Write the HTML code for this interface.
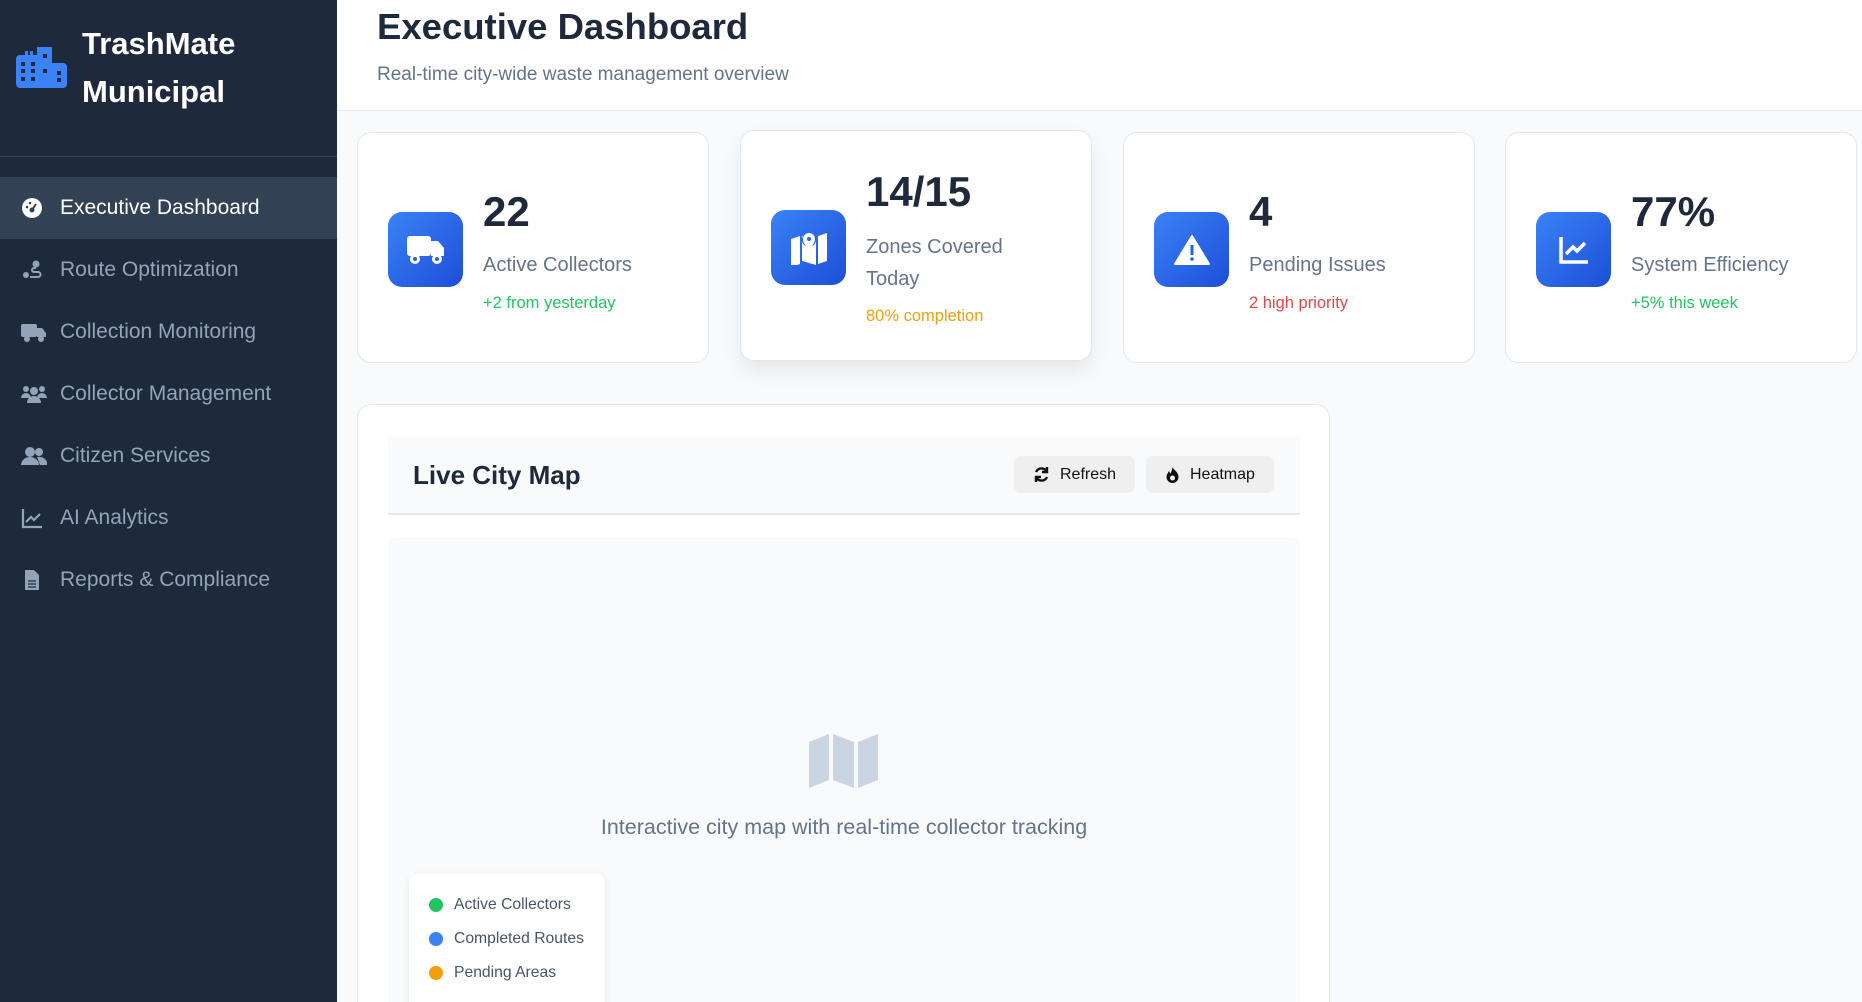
<!DOCTYPE html>
<html><head><meta charset="utf-8"><style>
*{box-sizing:border-box;margin:0;padding:0}
html,body{width:1862px;height:1002px;overflow:hidden}
body{font-family:"Liberation Sans",sans-serif;background:#f8fafc;position:relative}
#wrap{position:absolute;left:0;top:0;width:1862px;height:1002px;overflow:hidden}
.sb{position:absolute;left:0;top:0;width:337px;height:1002px;background:#1e293b}
.logo{position:absolute;left:16px;top:47px}
.brand{position:absolute;left:82px;top:20px;color:#fff;font-weight:bold;font-size:31px;line-height:48px}
.div{position:absolute;left:0;top:156px;width:337px;height:1px;background:#334155}
.nav{position:absolute;left:0;width:337px;height:62px;display:flex;align-items:center;color:#94a3b8;font-size:21px}
.nav.act{background:#334155;color:#fff}
.nav svg{position:absolute;left:21px}
.nav span{position:absolute;left:60px}
.hdr{position:absolute;left:337px;top:0;right:0;height:111px;background:#fff;border-bottom:1px solid #e2e8f0}
.hdr h1{position:absolute;left:40px;top:6px;font-size:36.5px;color:#1e293b}
.hdr p{position:absolute;left:40px;top:64px;font-size:19px;color:#64748b}
.card{position:absolute;top:132px;width:352px;height:231px;background:#fff;border:1px solid #e2e8f0;border-radius:14px}
.ib{position:absolute;left:30px;top:79px;width:75px;height:75px;border-radius:14px;background:linear-gradient(135deg,#3b82f6,#1d4ed8);display:flex;align-items:center;justify-content:center}
.num{position:absolute;left:125px;font-size:42px;font-weight:bold;color:#1e293b}
.lbl{position:absolute;left:125px;font-size:20px;color:#64748b;line-height:32px}
.sub{position:absolute;left:125px;font-size:16.5px}
.map{position:absolute;left:357px;top:404px;width:973px;height:598px;background:#fff;border:1px solid #e2e8f0;border-bottom:none;border-radius:14px 14px 0 0}
.mh{position:absolute;left:30px;top:31px;width:912px;height:79px;background:#f8fafc;border-bottom:2px solid #e2e8f0}
.mh h2{position:absolute;left:25px;top:24px;font-size:26px;color:#1e293b}
.btn{position:absolute;top:20px;height:37px;background:#efefef;border-radius:7px;font-size:16px;color:#111;display:flex;align-items:center;padding-left:19px;gap:10px}
.ma{position:absolute;left:30px;top:132px;width:912px;height:466px;background:#f8fafc;border-radius:10px 10px 0 0;overflow:hidden}
.lg{position:absolute;width:196px;height:140px;background:#fff;border-radius:8px 8px 0 0;box-shadow:0 2px 8px rgba(0,0,0,.08)}
.li{position:absolute;left:20px;font-size:15.7px;color:#475569;display:flex;align-items:center;gap:11px}
.dot{width:14px;height:14px;border-radius:50%}
</style></head><body><div id="wrap">
<div class="sb">
<svg class="logo" width="52" height="41" viewBox="0 0 52 41"><path d="M6 8h3V4h3v4h2V4h3v4h4V0h15v16h11a4 4 0 014 4v17a4 4 0 01-4 4H4a4 4 0 01-4-4V12a4 4 0 014-4z" fill="#3b82f6"/><g fill="#1e293b"><rect x="5" y="15" width="4" height="4"/><rect x="15" y="15" width="4" height="4"/><rect x="5" y="22" width="4" height="4"/><rect x="15" y="22" width="4" height="4"/><rect x="5" y="30" width="4" height="4"/><rect x="15" y="30" width="4" height="4"/><rect x="27" y="7" width="4" height="4"/><rect x="27" y="22" width="4" height="4"/><rect x="41" y="24" width="4" height="4"/><rect x="41" y="31" width="4" height="4"/></g></svg>
<div class="brand">TrashMate<br>Municipal</div>
<div class="div"></div>
<div class="nav act" style="top:177px"><svg width="22" height="22" viewBox="0 0 22 22"><circle cx="11" cy="11" r="10" fill="#fff"/><circle cx="11" cy="13" r="2.5" fill="#334155"/><path d="M11 13l4-6" stroke="#334155" stroke-width="2"/><circle cx="6" cy="10" r="1.3" fill="#334155"/><circle cx="9" cy="6" r="1.3" fill="#334155"/></svg><span>Executive Dashboard</span></div>
<div class="nav" style="top:239px"><svg width="22" height="22" viewBox="0 0 22 22" fill="#94a3b8"><circle cx="15" cy="5" r="3.5"/><circle cx="5" cy="16" r="3"/><path d="M9 18h8a2.5 2.5 0 000-5h-4a2 2 0 010-4h2" stroke="#94a3b8" stroke-width="2" fill="none"/></svg><span>Route Optimization</span></div>
<div class="nav" style="top:301px"><svg width="26" height="22" viewBox="0 0 26 22" fill="#94a3b8"><rect x="0" y="3" width="16" height="13" rx="2"/><path d="M16 7h5l4 5v4h-9z"/><circle cx="6" cy="18" r="3"/><circle cx="20" cy="18" r="3"/></svg><span>Collection Monitoring</span></div>
<div class="nav" style="top:363px"><svg width="26" height="22" viewBox="0 0 26 22" fill="#94a3b8"><circle cx="5" cy="6" r="3"/><circle cx="21" cy="6" r="3"/><circle cx="13" cy="8" r="4"/><path d="M0 15a5 5 0 0110 0zM16 15a5 5 0 0110 0zM6 20a7 7 0 0114 0z"/></svg><span>Collector Management</span></div>
<div class="nav" style="top:425px"><svg width="26" height="22" viewBox="0 0 26 22" fill="#94a3b8"><circle cx="9" cy="7" r="5"/><circle cx="18" cy="7" r="4"/><path d="M0 20a9 8 0 0118 0zM16 12a8 7 0 0110 8h-7z"/></svg><span>Citizen Services</span></div>
<div class="nav" style="top:487px"><svg width="22" height="22" viewBox="0 0 22 22" fill="none" stroke="#94a3b8" stroke-width="2.2"><path d="M2 2v18h19M5 15l5-5 3 3 6-6"/></svg><span>AI Analytics</span></div>
<div class="nav" style="top:549px"><svg width="22" height="22" viewBox="0 0 22 22"><path d="M4 1h9l5 5v15H4z" fill="#94a3b8"/><path d="M7 12h8M7 15h8M7 18h8" stroke="#1e293b" stroke-width="1.3"/></svg><span>Reports &amp; Compliance</span></div>
</div>
<div class="hdr"><h1>Executive Dashboard</h1><p>Real-time city-wide waste management overview</p></div>

<div class="card" style="left:357px"><div class="ib"><svg width="40" height="34" viewBox="0 0 40 34" fill="#fff"><rect x="1" y="3" width="24" height="20" rx="3"/><path d="M25 8h7l6 7v8H25z"/><circle cx="9" cy="26" r="5"/><circle cx="31" cy="26" r="5"/><circle cx="9" cy="26" r="2" fill="#2563eb"/><circle cx="31" cy="26" r="2" fill="#2563eb"/></svg></div>
<div class="num" style="top:55px">22</div><div class="lbl" style="top:116px">Active Collectors</div><div class="sub" style="top:161px;color:#22c55e">+2 from yesterday</div></div>

<div class="card" style="left:740px;top:130px;box-shadow:0 10px 20px rgba(0,0,0,.08)"><div class="ib"><svg width="38" height="34" viewBox="0 0 38 34" fill="#fff"><path d="M1 8l9-3v28l-9 3zM28 5l9-3v28l-9 3zM12 5l14 4v25l-14-4z"/><circle cx="19" cy="9" r="7" fill="#2563eb"/><path d="M19 2a6 6 0 016 6c0 5-6 11-6 11s-6-6-6-11a6 6 0 016-6z" fill="#fff"/><circle cx="19" cy="8" r="2" fill="#2563eb"/></svg></div>
<div class="num" style="top:37px">14/15</div><div class="lbl" style="top:100px">Zones Covered<br>Today</div><div class="sub" style="top:176px;color:#f59e0b">80% completion</div></div>

<div class="card" style="left:1123px"><div class="ib"><svg width="36" height="32" viewBox="0 0 36 32"><path d="M18 2L35 30H1z" fill="#fff" stroke="#fff" stroke-linejoin="round" stroke-width="2"/><rect x="16.5" y="11" width="3" height="10" fill="#2563eb"/><circle cx="18" cy="25" r="1.8" fill="#2563eb"/></svg></div>
<div class="num" style="top:55px">4</div><div class="lbl" style="top:116px">Pending Issues</div><div class="sub" style="top:161px;color:#ef4444">2 high priority</div></div>

<div class="card" style="left:1505px"><div class="ib"><svg width="32" height="30" viewBox="0 0 32 30" fill="none" stroke="#fff" stroke-width="3.5"><path d="M3 2v25h27M8 19l7-7 4 4 8-8"/></svg></div>
<div class="num" style="top:55px">77%</div><div class="lbl" style="top:116px">System Efficiency</div><div class="sub" style="top:161px;color:#22c55e">+5% this week</div></div>

<div class="map">
<div class="mh"><h2>Live City Map</h2>
<div class="btn" style="left:626px;width:121px"><svg width="17" height="17" viewBox="0 0 17 17" fill="none" stroke="#111" stroke-width="2.4"><path d="M14 6A6 6 0 003 6M3 11a6 6 0 0011 0"/><path d="M14 1v5h-5M3 16v-5h5" fill="none"/></svg>Refresh</div>
<div class="btn" style="left:758px;width:128px"><svg width="15" height="17" viewBox="0 0 15 17"><path d="M7.5 1c1 3 6 5 6 10a6 6 0 01-12 0c0-3 2-4 2-6 1 1 2 2 2 3 1-3 2-5 2-7z" fill="#111"/><circle cx="7.5" cy="12" r="2.5" fill="#efefef"/></svg>Heatmap</div>
</div>
<div class="ma">
<svg style="position:absolute;left:421px;top:197px" width="69" height="54" viewBox="0 0 69 54" fill="#cbd5e1"><path d="M0 8l20-8v46L0 54zM24 0l21 8v46l-21-8zM49 8l20-8v46l-20 8z"/></svg>
<div style="position:absolute;left:0;width:912px;top:278px;text-align:center;font-size:21.5px;color:#64748b">Interactive city map with real-time collector tracking</div>
<div class="lg" style="left:21px;top:337px">
<div class="li" style="top:22px"><div class="dot" style="background:#22c55e"></div>Active Collectors</div>
<div class="li" style="top:56px"><div class="dot" style="background:#3b82f6"></div>Completed Routes</div>
<div class="li" style="top:90px"><div class="dot" style="background:#f59e0b"></div>Pending Areas</div>
</div>
</div>
</div>
</div></body></html>
